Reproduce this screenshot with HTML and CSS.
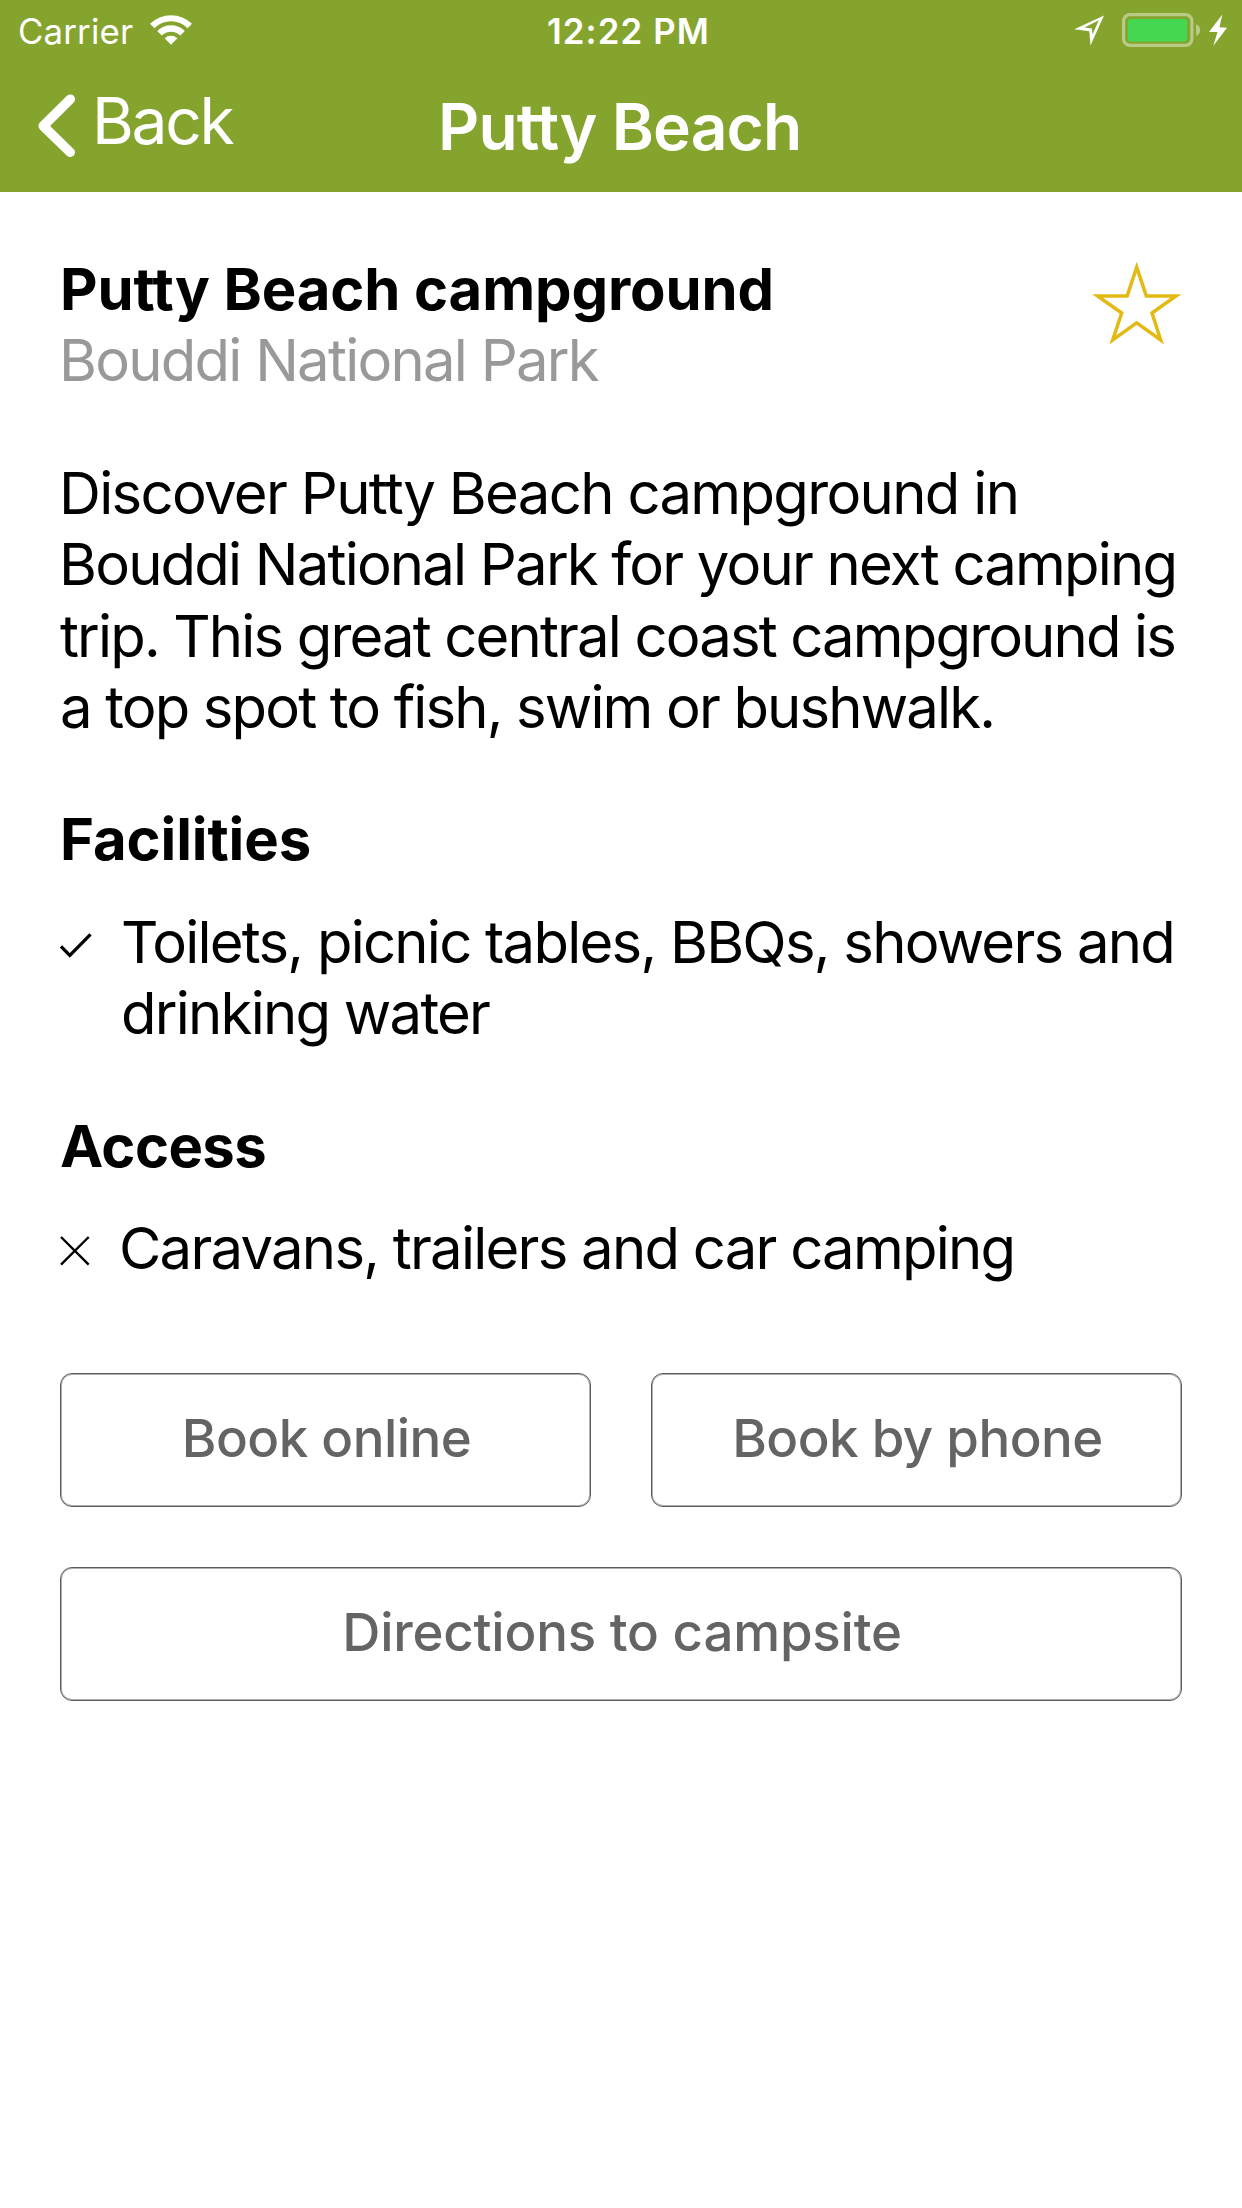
FILE: index.html
```html
<!DOCTYPE html>
<html lang="en">
<head>
<meta charset="utf-8">
<title>Putty Beach</title>
<link rel="stylesheet" href="styles.css">
</head>
<body>
<header class="header">
  <div class="status">
    <div class="status-left">
      <span class="carrier">Carrier</span>
      <svg class="wifi" width="44" height="32" viewBox="0 0 44 32" fill="#fff">
        <path d="M1 9.8A30 30 0 0 1 43 9.8L38.6 14.2A23.5 23.5 0 0 0 5.400 14.2Z"/>
        <path d="M8.200 17A19.500 19.500 0 0 1 35.800 17L31.300 21.500A13.200 13.200 0 0 0 12.700 21.500Z"/>
        <path d="M15.600 24.300A9.500 9.500 0 0 1 28.400 24.300L22 30.700Z"/>
      </svg>
    </div>
    <span class="time">12:22 PM</span>
    <svg class="status-icons" width="156" height="34" viewBox="0 0 156 34">
      <path fill="#fff" fill-rule="evenodd" d="M32 2.500L18.500 32.500L17.300 18.200L2.300 16.300ZM26.800 7.300L12.500 14.600L19.900 15.500L20.600 21.300Z"/>
      <rect x="51.600" y="1.600" width="68.300" height="30.800" rx="6.500" fill="none" stroke="#fff" stroke-opacity=".42" stroke-width="3.200"/>
      <rect x="55.800" y="6" width="59.500" height="22.500" rx="2.500" fill="#45d751"/>
      <path fill="#fff" fill-opacity=".42" d="M124 11Q128.200 13 128.200 17T124 23Z"/>
      <path fill="#fff" d="M150.300 1.500L137 19H145.500L141.300 32.700L155 14.800L147.500 14.300Z"/>
    </svg>
  </div>
  <nav class="nav">
    <a class="back">
      <svg class="chevron" width="38" height="64" viewBox="0 0 38 64" fill="none" stroke="#fff" stroke-width="9.500" stroke-linecap="round" stroke-linejoin="round"><path d="M32.300 5.200L5.200 32L32.300 58.300"/></svg>
      <span>Back</span>
    </a>
    <span class="nav-title">Putty Beach</span>
  </nav>
</header>
<main class="content">
  <div class="intro">
    <div>
      <h1 class="heading">Putty Beach campground</h1>
      <p class="park">Bouddi National Park</p>
    </div>
    <svg class="star" width="91" height="85" viewBox="0 0 91 85" fill="none" stroke="#e3ba14" stroke-width="3.500"><path d="M45.700 6.200L55.300 34.900H85L61 52L69.700 79L45.700 61.900L21.700 79L30.700 52L6.500 34.900H36.200Z"/></svg>
  </div>
  <p class="description"><span class="line line-loose">Discover Putty Beach campground in</span> <span class="line">Bouddi National Park for your next camping</span> <span class="line line-snug">trip. This great central coast campground is</span> <span class="line line-snug">a top spot to fish, swim or bushwalk.</span></p>
  <h2 class="heading section-title">Facilities</h2>
  <div class="item">
    <svg class="check" width="32" height="25" viewBox="0 0 32 25" fill="none" stroke="#000" stroke-width="3.300"><path d="M1 13.300L9.800 22.300L30.500 1.300"/></svg>
    <span>Toilets, picnic tables, BBQs, showers and drinking water</span>
  </div>
  <h2 class="heading section-title access">Access</h2>
  <div class="item item-no">
    <svg class="cross" width="30" height="30" viewBox="0 0 30 30" fill="none" stroke="#000" stroke-width="2.400"><path d="M1 1L28.700 28.700M28.700 1L1 28.700"/></svg>
    <span>Caravans, trailers and car camping</span>
  </div>
  <div class="actions">
    <button class="button">Book online</button>
    <button class="button">Book by phone</button>
    <button class="button wide">Directions to campsite</button>
  </div>
</main>
</body>
</html>
```
FILE: styles.css
```css
* { box-sizing: border-box; }
body {
  margin: 0;
  min-height: 2208px;
  background: #fff;
  color: #000;
  font-family: Inter, "Liberation Sans", sans-serif;
}
.header {
  height: 192px;
  background: #85a42e;
  color: #fff;
}
.status {
  height: 63px;
  padding: 0 14px 0 18px;
  display: grid;
  grid-template-columns: 1fr auto 1fr;
  font-size: 34.8px;
  line-height: 63px;
}
.status-left { display: flex; }
.carrier { letter-spacing: .17px; }
.wifi { margin: 14px 0 0 16px; }
.time { font-weight: 600; letter-spacing: 1.13px; margin-left: 11px; }
.status-icons { justify-self: end; margin-top: 13px; }
.nav {
  height: 129px;
  padding-left: 38px;
  display: grid;
  grid-template-columns: 400px auto 1fr;
  font-size: 64px;
  line-height: 127px;
}
.back {
  display: flex;
  gap: 16px;
  line-height: 116px;
  letter-spacing: -2.3px;
}
.chevron { margin-top: 31px; }
.nav-title { font-weight: 600; letter-spacing: -.85px; }
.content {
  padding: 62px 60px 0;
  font-size: 58px;
  line-height: 71.4px;
  letter-spacing: -1.75px;
}
.intro { display: flex; justify-content: space-between; }
.star { margin-top: 7px; }
.heading {
  margin: 0;
  font-size: 58px;
  font-weight: 700;
  letter-spacing: -.1px;
}
.park { margin: 0 0 0 -1px; color: #999; }
.description { margin: 61px 0; }
.line { display: block; white-space: nowrap; margin-left: -1px; letter-spacing: -1.8px; }
.line-loose { letter-spacing: -1.66px; }
.line-snug { margin-left: 0; letter-spacing: -1.85px; }
.section-title { margin-bottom: 31px; }
.access { margin-top: 61px; letter-spacing: -.6px; }
.item {
  display: grid;
  grid-template-columns: 61px 1fr;
}
.item-no { grid-template-columns: 59px 1fr; }
.check { margin-top: 26px; }
.cross { margin-top: 23px; }
.actions {
  margin-top: 89px;
  display: grid;
  grid-template-columns: 1fr 1fr;
  gap: 60px;
}
.button {
  height: 134px;
  padding: 0 0 5px 2px;
  border: 1px solid #5c5c5c;
  border-radius: 12px;
  box-shadow: inset 0 0 0 1px #b0b0b0;
  background: #fff;
  color: #646464;
  font: 500 52.8px Inter, "Liberation Sans", sans-serif;
  letter-spacing: -.5px;
}
.wide { grid-column: 1 / -1; letter-spacing: -.2px; }
```
